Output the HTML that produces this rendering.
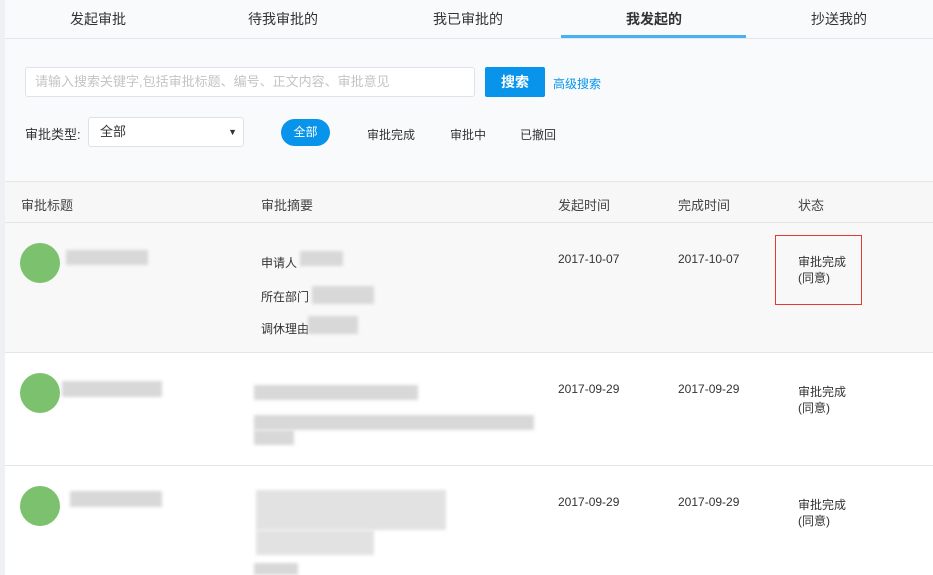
<!DOCTYPE html>
<html><head><meta charset="utf-8"><style>
*{margin:0;padding:0;box-sizing:border-box}
body{width:933px;height:575px;overflow:hidden;background:#fff;font-family:"Liberation Sans","Noto Sans CJK SC",sans-serif;font-size:12px;color:#333;position:relative}
.lb{position:absolute;left:0;top:0;width:5px;height:575px;background:#eef0f3}
.top{position:absolute;left:5px;top:0;width:928px;height:182px;background:#f9fafc}
.tabs{position:absolute;left:5px;top:0;width:928px;height:39px;border-bottom:1px solid #e3e6eb}
.tab{position:absolute;top:9px;font-size:14px;color:#333}
.act{position:absolute;left:561px;top:35px;width:185px;height:3px;background:#48b1f0}
.inp{position:absolute;left:25px;top:67px;width:450px;height:30px;border:1px solid #dfe2e6;border-radius:3px;background:#fff;color:#c4c4c4;font-size:13px;line-height:28px;padding-left:9px}
.btn{position:absolute;left:485px;top:67px;width:60px;height:30px;background:#0994ec;border-radius:2px;color:#fff;font-weight:bold;font-size:14px;text-align:center;line-height:30px}
.adv{position:absolute;left:553px;top:75px;color:#0994ec;font-size:12px}
.lbl{position:absolute;left:25px;top:124px;font-size:13px}
.sel{position:absolute;left:88px;top:117px;width:156px;height:30px;border:1px solid #dfe2e6;border-radius:3px;background:#fff;font-size:13px;line-height:28px;padding-left:11px}
.sel:after{content:"▼";position:absolute;right:6px;top:0;font-size:9px}
.pill{position:absolute;left:281px;top:119px;width:49px;height:27px;border-radius:14px;background:#0994ec;color:#fff;text-align:center;line-height:27px;font-size:12px}
.f{position:absolute;top:126px;font-size:12px}
.hdr{position:absolute;left:5px;top:181px;width:928px;height:42px;background:#f7f7f7;border-top:1px solid #e5e5e5;border-bottom:1px solid #e5e5e5}
.h{position:absolute;top:195px;font-size:13px;color:#444}
.row{position:absolute;left:5px;width:928px;border-bottom:1px solid #e5e5e5}
.av{position:absolute;left:20px;width:40px;height:40px;border-radius:50%;background:#7cc26e}
.bl{position:absolute;background:#d8d8d8;filter:blur(1.5px)}
.t{position:absolute;font-size:12px}
.box{position:absolute;left:775px;top:235px;width:87px;height:70px;border:1px solid #e53935}
</style></head><body>
<div class="top"></div>
<div class="lb"></div>
<div class="tabs"></div>
<div class="tab" style="left:70px">发起审批</div>
<div class="tab" style="left:248px">待我审批的</div>
<div class="tab" style="left:433px">我已审批的</div>
<div class="tab" style="left:626px;font-weight:bold">我发起的</div>
<div class="tab" style="left:811px">抄送我的</div>
<div class="act"></div>
<div class="inp">请输入搜索关键字,包括审批标题、编号、正文内容、审批意见</div>
<div class="btn">搜索</div>
<div class="adv">高级搜索</div>
<div class="lbl">审批类型:</div>
<div class="sel">全部</div>
<div class="pill">全部</div>
<div class="f" style="left:367px">审批完成</div>
<div class="f" style="left:450px">审批中</div>
<div class="f" style="left:520px">已撤回</div>
<div class="hdr"></div>
<div class="h" style="left:21px">审批标题</div>
<div class="h" style="left:261px">审批摘要</div>
<div class="h" style="left:558px">发起时间</div>
<div class="h" style="left:678px">完成时间</div>
<div class="h" style="left:798px">状态</div>
<div class="row" style="top:223px;height:130px;background:#f8f8f8"></div>
<div class="row" style="top:353px;height:113px"></div>
<div class="av" style="top:243px"></div>
<div class="bl" style="left:66px;top:250px;width:82px;height:15px"></div>
<div class="t" style="left:261px;top:254px">申请人</div><div class="bl" style="left:300px;top:251px;width:43px;height:15px"></div>
<div class="t" style="left:261px;top:288px">所在部门</div><div class="bl" style="left:312px;top:286px;width:62px;height:18px"></div>
<div class="t" style="left:261px;top:320px">调休理由</div><div class="bl" style="left:308px;top:316px;width:50px;height:18px"></div>
<div class="t" style="left:558px;top:252px">2017-10-07</div>
<div class="t" style="left:678px;top:252px">2017-10-07</div>
<div class="t" style="left:798px;top:254px;line-height:16px">审批完成<br>(同意)</div>
<div class="box"></div>
<div class="av" style="top:373px"></div>
<div class="bl" style="left:62px;top:381px;width:100px;height:16px"></div>
<div class="bl" style="left:254px;top:385px;width:164px;height:15px"></div>
<div class="bl" style="left:254px;top:415px;width:280px;height:15px"></div>
<div class="bl" style="left:254px;top:430px;width:40px;height:15px"></div>
<div class="t" style="left:558px;top:382px">2017-09-29</div>
<div class="t" style="left:678px;top:382px">2017-09-29</div>
<div class="t" style="left:798px;top:384px;line-height:16px">审批完成<br>(同意)</div>
<div class="av" style="top:486px"></div>
<div class="bl" style="left:70px;top:491px;width:92px;height:16px"></div>
<div class="bl" style="left:256px;top:490px;width:190px;height:40px;background:#e2e2e2"></div>
<div class="bl" style="left:256px;top:530px;width:118px;height:25px;background:#e2e2e2"></div>
<div class="bl" style="left:254px;top:563px;width:44px;height:12px"></div>
<div class="t" style="left:558px;top:495px">2017-09-29</div>
<div class="t" style="left:678px;top:495px">2017-09-29</div>
<div class="t" style="left:798px;top:497px;line-height:16px">审批完成<br>(同意)</div>
</body></html>
